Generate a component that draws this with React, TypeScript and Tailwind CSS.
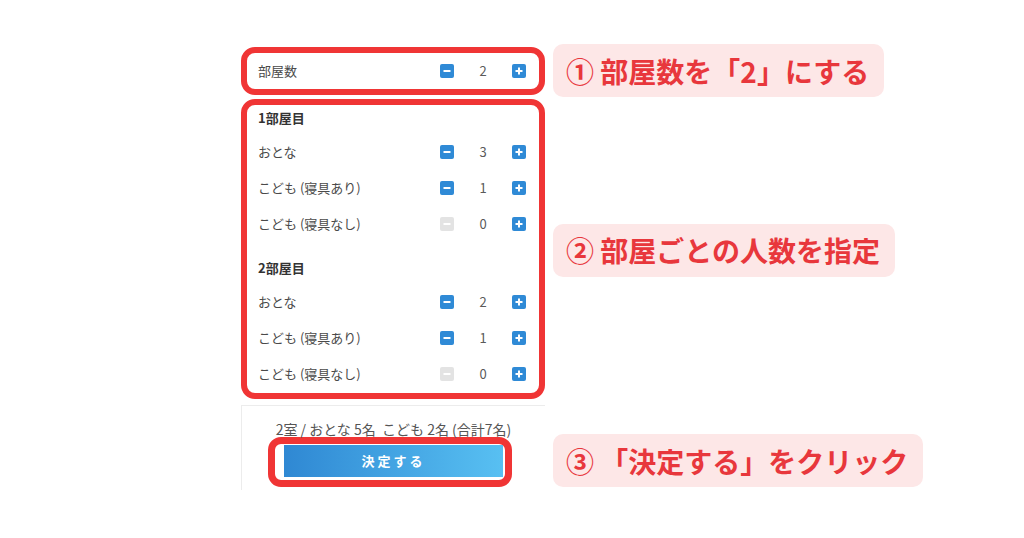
import React from 'react';

type Row = { label: string; value: number };

const rooms: { title: string; rows: Row[] }[] = [
  {
    title: '1部屋目',
    rows: [
      { label: 'おとな', value: 3 },
      { label: 'こども (寝具あり)', value: 1 },
      { label: 'こども (寝具なし)', value: 0 },
    ],
  },
  {
    title: '2部屋目',
    rows: [
      { label: 'おとな', value: 2 },
      { label: 'こども (寝具あり)', value: 1 },
      { label: 'こども (寝具なし)', value: 0 },
    ],
  },
];

const Stepper = ({ value }: { value: number }) => {
  const disabled = value === 0;
  return (
    <div className="flex items-center">
      <button
        className={`flex h-[14px] w-[14px] items-center justify-center rounded-[2px] ${
          disabled ? 'bg-[#e3e3e3]' : 'bg-[#2f8ad6]'
        }`}
      >
        <svg viewBox="0 0 14 14" className="h-[14px] w-[14px]">
          <path d="M3.5 7h7" stroke="white" strokeWidth="2" />
        </svg>
      </button>
      <span className="w-[58px] text-center text-[13px] text-[#5a5a5a]">{value}</span>
      <button className="flex h-[14px] w-[14px] items-center justify-center rounded-[2px] bg-[#2f8ad6]">
        <svg viewBox="0 0 14 14" className="h-[14px] w-[14px]">
          <path d="M3.5 7h7M7 3.5v7" stroke="white" strokeWidth="2" />
        </svg>
      </button>
    </div>
  );
};

const Callout = ({ children, className = '' }: { children: React.ReactNode; className?: string }) => (
  <div
    className={`flex h-[53px] w-fit items-center whitespace-nowrap rounded-[10px] bg-[#fde7e7] pl-[13px] pr-[15px] text-[28px] font-bold leading-none text-[#e8373c] ${className}`}
  >
    {children}
  </div>
);

export default function App() {
  return (
    <div className="min-h-[538px] bg-white pl-[241px] pt-[44px] font-['Noto_Sans_CJK_JP','Noto_Sans',sans-serif]">
      <div className="grid grid-cols-[304px_auto] items-center justify-start gap-x-2">
        {/* 部屋数 */}
        <div className="flex h-[48px] items-center justify-between rounded-[14px] border-[6px] border-[#f03535] bg-white pl-[11px] pr-[13px]">
          <span className="text-[13px] text-[#4a4a4a]">部屋数</span>
          <Stepper value={2} />
        </div>
        <Callout>① 部屋数を「2」にする</Callout>

        {/* 部屋ごと */}
        <div className="mt-[2px] h-[300px] rounded-[14px] border-[6px] border-[#f03535] bg-white pl-[11px] pr-[13px] pt-px">
          {rooms.map((room, i) => (
            <div key={room.title} className={i > 0 ? 'mt-[14px]' : ''}>
              <div className="mb-1 flex h-[24px] items-center text-[13px] font-bold text-[#333]">
                {room.title}
              </div>
              {room.rows.map((row) => (
                <div key={row.label} className="flex h-[36px] items-center justify-between">
                  <span className="text-[13px] text-[#4a4a4a]">{row.label}</span>
                  <Stepper value={row.value} />
                </div>
              ))}
            </div>
          ))}
        </div>
        <Callout className="mt-1">② 部屋ごとの人数を指定</Callout>

        {/* footer */}
        <div className="mt-[6px] border-l border-t border-[#ececec] pb-[3px] pt-[15px]">
          <p className="text-center text-[14px] leading-[16px] text-[#555]">
            2室 / おとな 5名&nbsp; こども 2名 (合計7名)
          </p>
          <div className="ml-[26px] h-[50px] w-[244px] rounded-[13px] border-[7px] border-[#f03535] bg-white pl-[9px] pr-[2px] pt-px">
            <button className="flex h-[32px] w-[219px] items-center justify-center bg-gradient-to-r from-[#2f88d3] to-[#58c0f2] text-[13px] font-bold tracking-[3px] text-white">
              決定する
            </button>
          </div>
        </div>
        <Callout className="mb-[3px] self-end">③ 「決定する」をクリック</Callout>
      </div>
    </div>
  );
}
